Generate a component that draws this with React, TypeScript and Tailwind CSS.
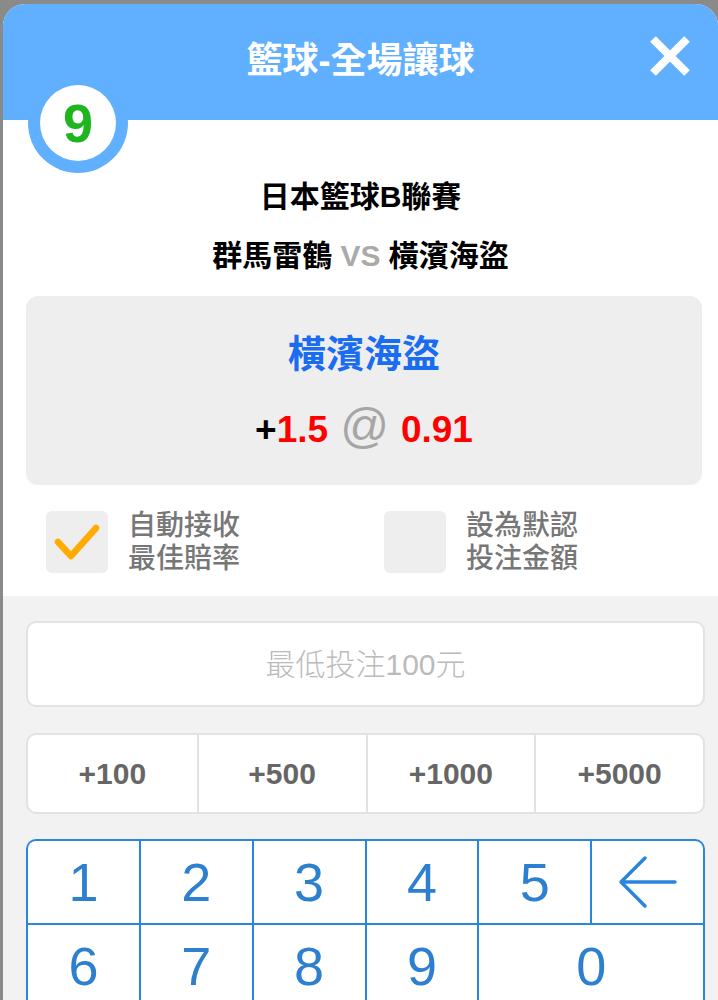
import React from "react";

const FONT = '"Liberation Sans", "Noto Sans CJK TC", sans-serif';

const AMOUNTS = ["+100", "+500", "+1000", "+5000"];

function CheckBox({ checked, lines }: { checked: boolean; lines: [string, string] }) {
  return (
    <div className="flex items-center gap-[20px]">
      <div className="flex h-[62px] w-[62px] items-center justify-center rounded-[6px] bg-[#eeeeee]">
        {checked && (
          <svg width="48" height="40" viewBox="0 0 48 40" fill="none">
            <path
              d="M5 20 L18 34 L43 6"
              stroke="#ffab00"
              strokeWidth="6.5"
              strokeLinecap="round"
              strokeLinejoin="round"
            />
          </svg>
        )}
      </div>
      <div className="text-[28px] font-medium leading-[33px] text-[#777777]">
        <div>{lines[0]}</div>
        <div>{lines[1]}</div>
      </div>
    </div>
  );
}

function BackArrow() {
  return (
    <svg width="62" height="54" viewBox="0 0 62 54" fill="none">
      <path
        d="M28 3 L4 27 L28 51 M4 27 L58 27"
        stroke="#2a86dd"
        strokeWidth="3.5"
        strokeLinecap="round"
        strokeLinejoin="round"
      />
    </svg>
  );
}

function Key({ children, wide }: { children: React.ReactNode; wide?: boolean }) {
  return (
    <div
      className={
        "flex h-[82px] items-center justify-center bg-white text-[54px] leading-none text-[#2d7fcf] " +
        (wide ? "col-span-2" : "")
      }
    >
      {children}
    </div>
  );
}

export default function App() {
  return (
    <div
      className="h-[1000px] w-[718px] overflow-hidden bg-[#8a8a8a] pl-[3px] pt-[4px]"
      style={{ fontFamily: FONT }}
    >
      <div className="relative h-full overflow-hidden rounded-t-[22px] bg-white">
        {/* 헤더 */}
        <div className="relative flex h-[116px] items-center justify-center bg-[#61b0ff] pb-[2px]">
          <h1 className="text-[36px] font-bold text-white">籃球-全場讓球</h1>
          <button type="button" className="absolute right-[26px] top-[30px]" aria-label="close">
            <svg width="44" height="44" viewBox="0 0 44 44">
              <path d="M5 5 L39 39 M39 5 L5 39" stroke="white" strokeWidth="8" />
            </svg>
          </button>
        </div>

        {/* 번호 배지 */}
        <div className="absolute left-[25px] top-[69px] flex h-[100px] w-[100px] items-center justify-center rounded-full bg-[#61b0ff]">
          <div className="flex h-[76px] w-[76px] items-center justify-center rounded-full bg-white text-[54px] font-bold leading-none text-[#1fb51f]">
            9
          </div>
        </div>

        {/* 경기 정보 */}
        <div className="flex flex-col items-center pt-[57px]">
          <p className="text-[30px] font-bold leading-[40px] text-black">日本籃球B聯賽</p>
          <p className="mt-[19px] text-[30px] font-bold leading-[40px] text-black">
            群馬雷鶴 <span className="text-[#aaaaaa]">VS</span> 橫濱海盜
          </p>
        </div>

        <div className="ml-[23px] mr-[16px] mt-[20px] flex h-[189px] flex-col items-center rounded-[12px] bg-[#eeeeee] pt-[35px]">
          <p className="text-[38px] font-bold leading-[46px] text-[#1a6cf0]">橫濱海盜</p>
          <p className="mt-[27px] flex items-baseline text-[37px] font-bold leading-[44px]">
            <span className="text-black">+</span>
            <span className="text-[#ff0000]">1.5</span>
            <span className="mx-[12px] text-[48px] font-normal text-[#a6a6a6]">@</span>
            <span className="text-[#ff0000]">0.91</span>
          </p>
        </div>

        <div className="flex h-[111px] items-start pl-[43px] pt-[24px]">
          <div className="w-[338px]">
            <CheckBox checked lines={["自動接收", "最佳賠率"]} />
          </div>
          <CheckBox checked={false} lines={["設為默認", "投注金額"]} />
        </div>

        {/* 투입 영역 */}
        <div className="h-full bg-[#f2f2f2] pl-[23px] pr-[13px] pt-[25px]">
          <div className="flex h-[86px] items-center justify-center rounded-[10px] border-2 border-[#e2e2e2] bg-white text-[30px] font-light text-[#bbbbbb]">
            最低投注100元
          </div>

          <div className="mt-[26px] grid h-[81px] grid-cols-4 overflow-hidden rounded-[10px] border-2 border-[#e2e2e2] bg-white">
            {AMOUNTS.map((a, i) => (
              <div
                key={a}
                className={
                  "flex items-center justify-center text-[30px] font-bold text-[#666666] " +
                  (i > 0 ? "border-l-2 border-[#e2e2e2]" : "")
                }
              >
                {a}
              </div>
            ))}
          </div>

          <div className="mt-[25px] grid grid-cols-6 gap-[2px] overflow-hidden rounded-[10px] border-2 border-[#2a86dd] bg-[#2a86dd]">
            {["1", "2", "3", "4", "5"].map((d) => (
              <Key key={d}>{d}</Key>
            ))}
            <Key>
              <BackArrow />
            </Key>
            {["6", "7", "8", "9"].map((d) => (
              <Key key={d}>{d}</Key>
            ))}
            <Key wide>0</Key>
          </div>
        </div>
      </div>
    </div>
  );
}
